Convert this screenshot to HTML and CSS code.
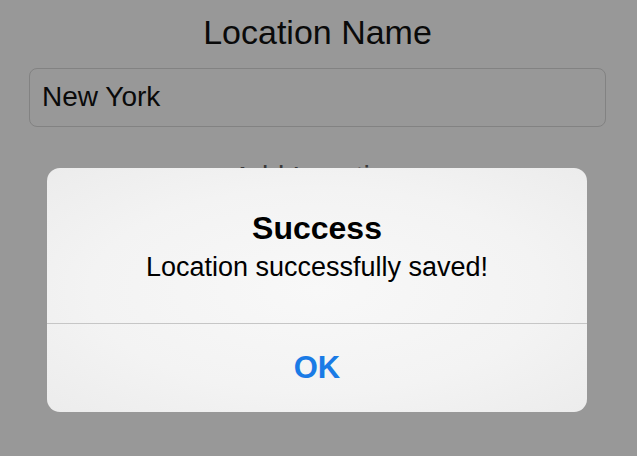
FILE: index.html
```html
<!DOCTYPE html>
<html>
<head>
<meta charset="utf-8">
<link rel="stylesheet" href="styles.css">
</head>
<body>
<div class="screen">
  <div class="form">
    <div class="label">Location Name</div>
    <div class="field"><span class="field-text">New York</span></div>
    <div class="add-btn">Add Location</div>
  </div>
  <div class="alert">
    <div class="alert-body">
      <div class="alert-title">Success</div>
      <div class="alert-msg">Location successfully saved!</div>
    </div>
    <div class="alert-actions">
      <div class="alert-ok">OK</div>
    </div>
  </div>
</div>
</body>
</html>
```
FILE: styles.css
```css
html, body {
  margin: 0;
  padding: 0;
}
body {
  background: #989898;
  font-family: "Liberation Sans", Arial, sans-serif;
  width: 637px;
  height: 456px;
  overflow: hidden;
}
.screen {
  position: relative;
  width: 637px;
  height: 456px;
}
.form {
  margin-left: 29px;
  width: 577px;
  padding-top: 12px;
  display: flex;
  flex-direction: column;
}
.label {
  font-size: 34px;
  line-height: 40px;
  height: 40px;
  text-align: center;
  color: #0a0a0a;
}
.field {
  margin-top: 16px;
  height: 59px;
  box-sizing: border-box;
  border: 1px solid #828282;
  border-radius: 8px;
  padding: 12px 12px 0 12px;
}
.field-text {
  display: block;
  font-size: 28px;
  line-height: 32px;
  color: #0a0a0a;
}
.add-btn {
  margin-top: 33px;
  font-size: 29px;
  line-height: 34px;
  text-align: center;
  color: #3a3a3a;
}
.alert {
  position: absolute;
  left: 47px;
  top: 168px;
  width: 540px;
  height: 244px;
  border-radius: 13px;
  overflow: hidden;
  background: radial-gradient(ellipse 70% 70% at 50% 50%, #f8f8f8 0%, #f3f3f3 60%, #ececec 100%);
  display: flex;
  flex-direction: column;
}
.alert-body {
  height: 156px;
  box-sizing: border-box;
  padding-top: 42px;
  text-align: center;
  border-bottom: 1px solid #c6c6c6;
}
.alert-title {
  font-size: 32px;
  font-weight: bold;
  line-height: 37px;
  color: #000;
}
.alert-msg {
  margin-top: 5px;
  font-size: 27px;
  line-height: 31px;
  color: #000;
}
.alert-actions {
  flex: 1;
  display: flex;
  align-items: center;
  justify-content: center;
}
.alert-ok {
  font-size: 31px;
  font-weight: bold;
  line-height: 36px;
  color: #1a7be6;
}
```
